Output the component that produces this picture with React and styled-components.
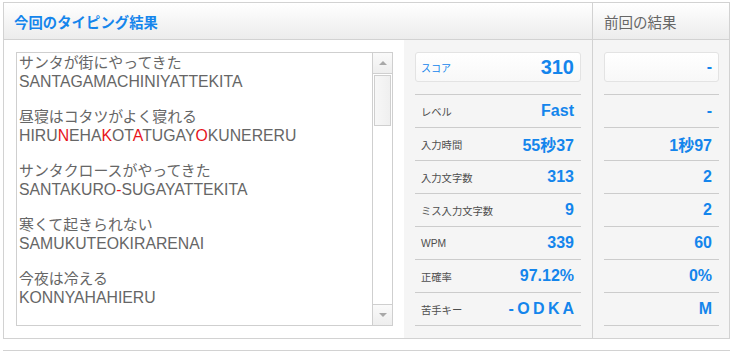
import React from "react";
import styled, { createGlobalStyle } from "styled-components";

const Global = createGlobalStyle`
  html, body { margin: 0; padding: 0; background: #fff; }
  body { font-family: "Liberation Sans", "Noto Sans CJK JP", Arial, sans-serif; overflow: hidden; }
  * { box-sizing: border-box; }
`;

const BLUE = "#1485ec";

const Panel = styled.section`
  margin: 2px 0 0 3px;
  width: 727px;
  border: 1px solid #d2d2d2;
`;

const Header = styled.div`
  display: grid;
  grid-template-columns: 588px 137px;
  height: 37px;
  border-bottom: 1px solid #d2d2d2;
  background: linear-gradient(#ffffff, #ececec);
`;

const HeadCell = styled.div`
  display: flex;
  align-items: center;
  padding-left: ${(p) => (p.$side ? "11px" : "10px")};
  border-left: ${(p) => (p.$side ? "1px solid #d2d2d2" : "none")};
  font-family: "Noto Sans CJK JP", sans-serif;
  font-size: ${(p) => (p.$side ? "14.5px" : "14.3px")};
  font-weight: ${(p) => (p.$side ? 400 : 700)};
  color: ${(p) => (p.$side ? "#666" : BLUE)};
  letter-spacing: ${(p) => (p.$side ? "0" : "0.1px")};
`;

const Body = styled.div`
  display: grid;
  grid-template-columns: 400px 188px 137px;
  height: 298px;
`;

const LeftCell = styled.div`
  padding: 12px;
  background: #fff;
`;

const TextBox = styled.div`
  display: flex;
  width: 377px;
  height: 274px;
  border: 1px solid #cfcfcf;
  background: #fff;
`;

const TextContent = styled.div`
  flex: 1;
  padding: 0 2px;
  color: #666;
`;

const Entry = styled.div`
  margin-bottom: 16px;
`;

const KanaLine = styled.div`
  font-family: "Noto Sans CJK JP", sans-serif;
  font-size: 14.9px;
  line-height: 18px;
  white-space: nowrap;
`;

const RomaLine = styled.div`
  font-family: "Liberation Sans", Arial, sans-serif;
  font-size: 15.8px;
  line-height: 18px;
  padding-top: 2px;
  white-space: nowrap;
`;

const Miss = styled.span`
  color: #e8141b;
`;

const ScrollBar = styled.div`
  width: 20px;
  border-left: 1px solid #cfcfcf;
  display: flex;
  flex-direction: column;
  background: #fff;
`;

const ScrollBtn = styled.div`
  height: 21px;
  display: flex;
  align-items: center;
  justify-content: center;
  background: linear-gradient(#fafafa, #eeeeee);
  border-top: ${(p) => (p.$down ? "1px solid #cfcfcf" : "none")};
  border-bottom: ${(p) => (p.$down ? "none" : "1px solid #cfcfcf")};
`;

const Arrow = styled.div`
  width: 0;
  height: 0;
  border-left: 4px solid transparent;
  border-right: 4px solid transparent;
  ${(p) => (p.$down ? "border-top: 4px solid #a8a8a8;" : "border-bottom: 4px solid #a8a8a8;")}
`;

const Track = styled.div`
  flex: 1;
  padding: 1px 1px 0 1px;
`;

const Thumb = styled.div`
  height: 51px;
  border: 1px solid #cfcfcf;
  background: linear-gradient(90deg, #f7f7f7, #efefef);
`;

const StatCell = styled.div`
  padding: 12px ${(p) => (p.$side ? "10px" : "11px")} 12px 11px;
  background: #f5f5f5;
  border-left: ${(p) => (p.$side ? "1px solid #d2d2d2" : "none")};
`;

const ScoreBox = styled.div`
  height: 30px;
  display: flex;
  align-items: center;
  justify-content: space-between;
  padding: 0 6px 0 5px;
  border: 1px solid #e3e3e3;
  border-radius: 3px;
  background: linear-gradient(#ffffff, #f8f8f8);
  margin-bottom: 12px;
`;

const ScoreLabel = styled.span`
  font-family: "Noto Sans CJK JP", sans-serif;
  font-size: 10px;
  color: ${BLUE};
`;

const ScoreValue = styled.span`
  font-family: "Liberation Sans", Arial, sans-serif;
  font-weight: 700;
  font-size: ${(p) => (p.$dash ? "16px" : "20px")};
  color: ${BLUE};
`;

const RowList = styled.div`
  border-top: 1px solid #cccccc;
`;

const Row = styled.div`
  height: 33px;
  display: flex;
  align-items: center;
  justify-content: space-between;
  padding: 0 7px 0 6px;
  border-bottom: 1px solid #cccccc;
`;

const RowLabel = styled.span`
  font-family: "Liberation Sans", "Noto Sans CJK JP", sans-serif;
  font-size: 10.3px;
  color: #4e4e4e;
`;

const RowValue = styled.span`
  font-family: "Liberation Sans", "Noto Sans CJK JP", Arial, sans-serif;
  font-weight: 700;
  font-size: 16px;
  color: ${BLUE};
  white-space: pre;
  word-spacing: ${(p) => (p.$spaced ? "-1px" : "0")};
`;

const NextPanel = styled.div`
  margin: 11px 0 0 3px;
  width: 727px;
  height: 1px;
  border-top: 1px solid #d2d2d2;
`;

const entries = [
  { kana: "サンタが街にやってきた", roma: "SANTAGAMACHINIYATTEKITA" },
  {
    kana: "昼寝はコタツがよく寝れる",
    roma: [["HIRU"], ["N", 1], ["EHA"], ["K", 1], ["OT"], ["A", 1], ["TUGAY"], ["O", 1], ["KUNERERU"]],
  },
  { kana: "サンタクロースがやってきた", roma: [["SANTAKURO"], ["-", 1], ["SUGAYATTEKITA"]] },
  { kana: "寒くて起きられない", roma: "SAMUKUTEOKIRARENAI" },
  { kana: "今夜は冷える", roma: "KONNYAHAHIERU" },
];

const current = [
  ["レベル", "Fast"],
  ["入力時間", "55秒37"],
  ["入力文字数", "313"],
  ["ミス入力文字数", "9"],
  ["WPM", "339"],
  ["正確率", "97.12%"],
  ["苦手キー", "- O D K A", true],
];

const previous = ["-", "1秒97", "2", "2", "60", "0%", "M"];

function Roma({ value }) {
  if (typeof value === "string") return <RomaLine>{value}</RomaLine>;
  return (
    <RomaLine>
      {value.map(([t, miss], i) => (miss ? <Miss key={i}>{t}</Miss> : <span key={i}>{t}</span>))}
    </RomaLine>
  );
}

export default function App() {
  return (
    <>
      <Global />
      <Panel>
        <Header>
          <HeadCell>今回のタイピング結果</HeadCell>
          <HeadCell $side>前回の結果</HeadCell>
        </Header>
        <Body>
          <LeftCell>
            <TextBox>
              <TextContent>
                {entries.map((e, i) => (
                  <Entry key={i}>
                    <KanaLine>{e.kana}</KanaLine>
                    <Roma value={e.roma} />
                  </Entry>
                ))}
              </TextContent>
              <ScrollBar>
                <ScrollBtn>
                  <Arrow />
                </ScrollBtn>
                <Track>
                  <Thumb />
                </Track>
                <ScrollBtn $down>
                  <Arrow $down />
                </ScrollBtn>
              </ScrollBar>
            </TextBox>
          </LeftCell>
          <StatCell>
            <ScoreBox>
              <ScoreLabel>スコア</ScoreLabel>
              <ScoreValue>310</ScoreValue>
            </ScoreBox>
            <RowList>
              {current.map(([l, v, sp]) => (
                <Row key={l}>
                  <RowLabel>{l}</RowLabel>
                  <RowValue $spaced={sp}>{v}</RowValue>
                </Row>
              ))}
            </RowList>
          </StatCell>
          <StatCell $side>
            <ScoreBox>
              <span />
              <ScoreValue $dash>-</ScoreValue>
            </ScoreBox>
            <RowList>
              {previous.map((v, i) => (
                <Row key={i}>
                  <span />
                  <RowValue>{v}</RowValue>
                </Row>
              ))}
            </RowList>
          </StatCell>
        </Body>
      </Panel>
      <NextPanel />
    </>
  );
}
